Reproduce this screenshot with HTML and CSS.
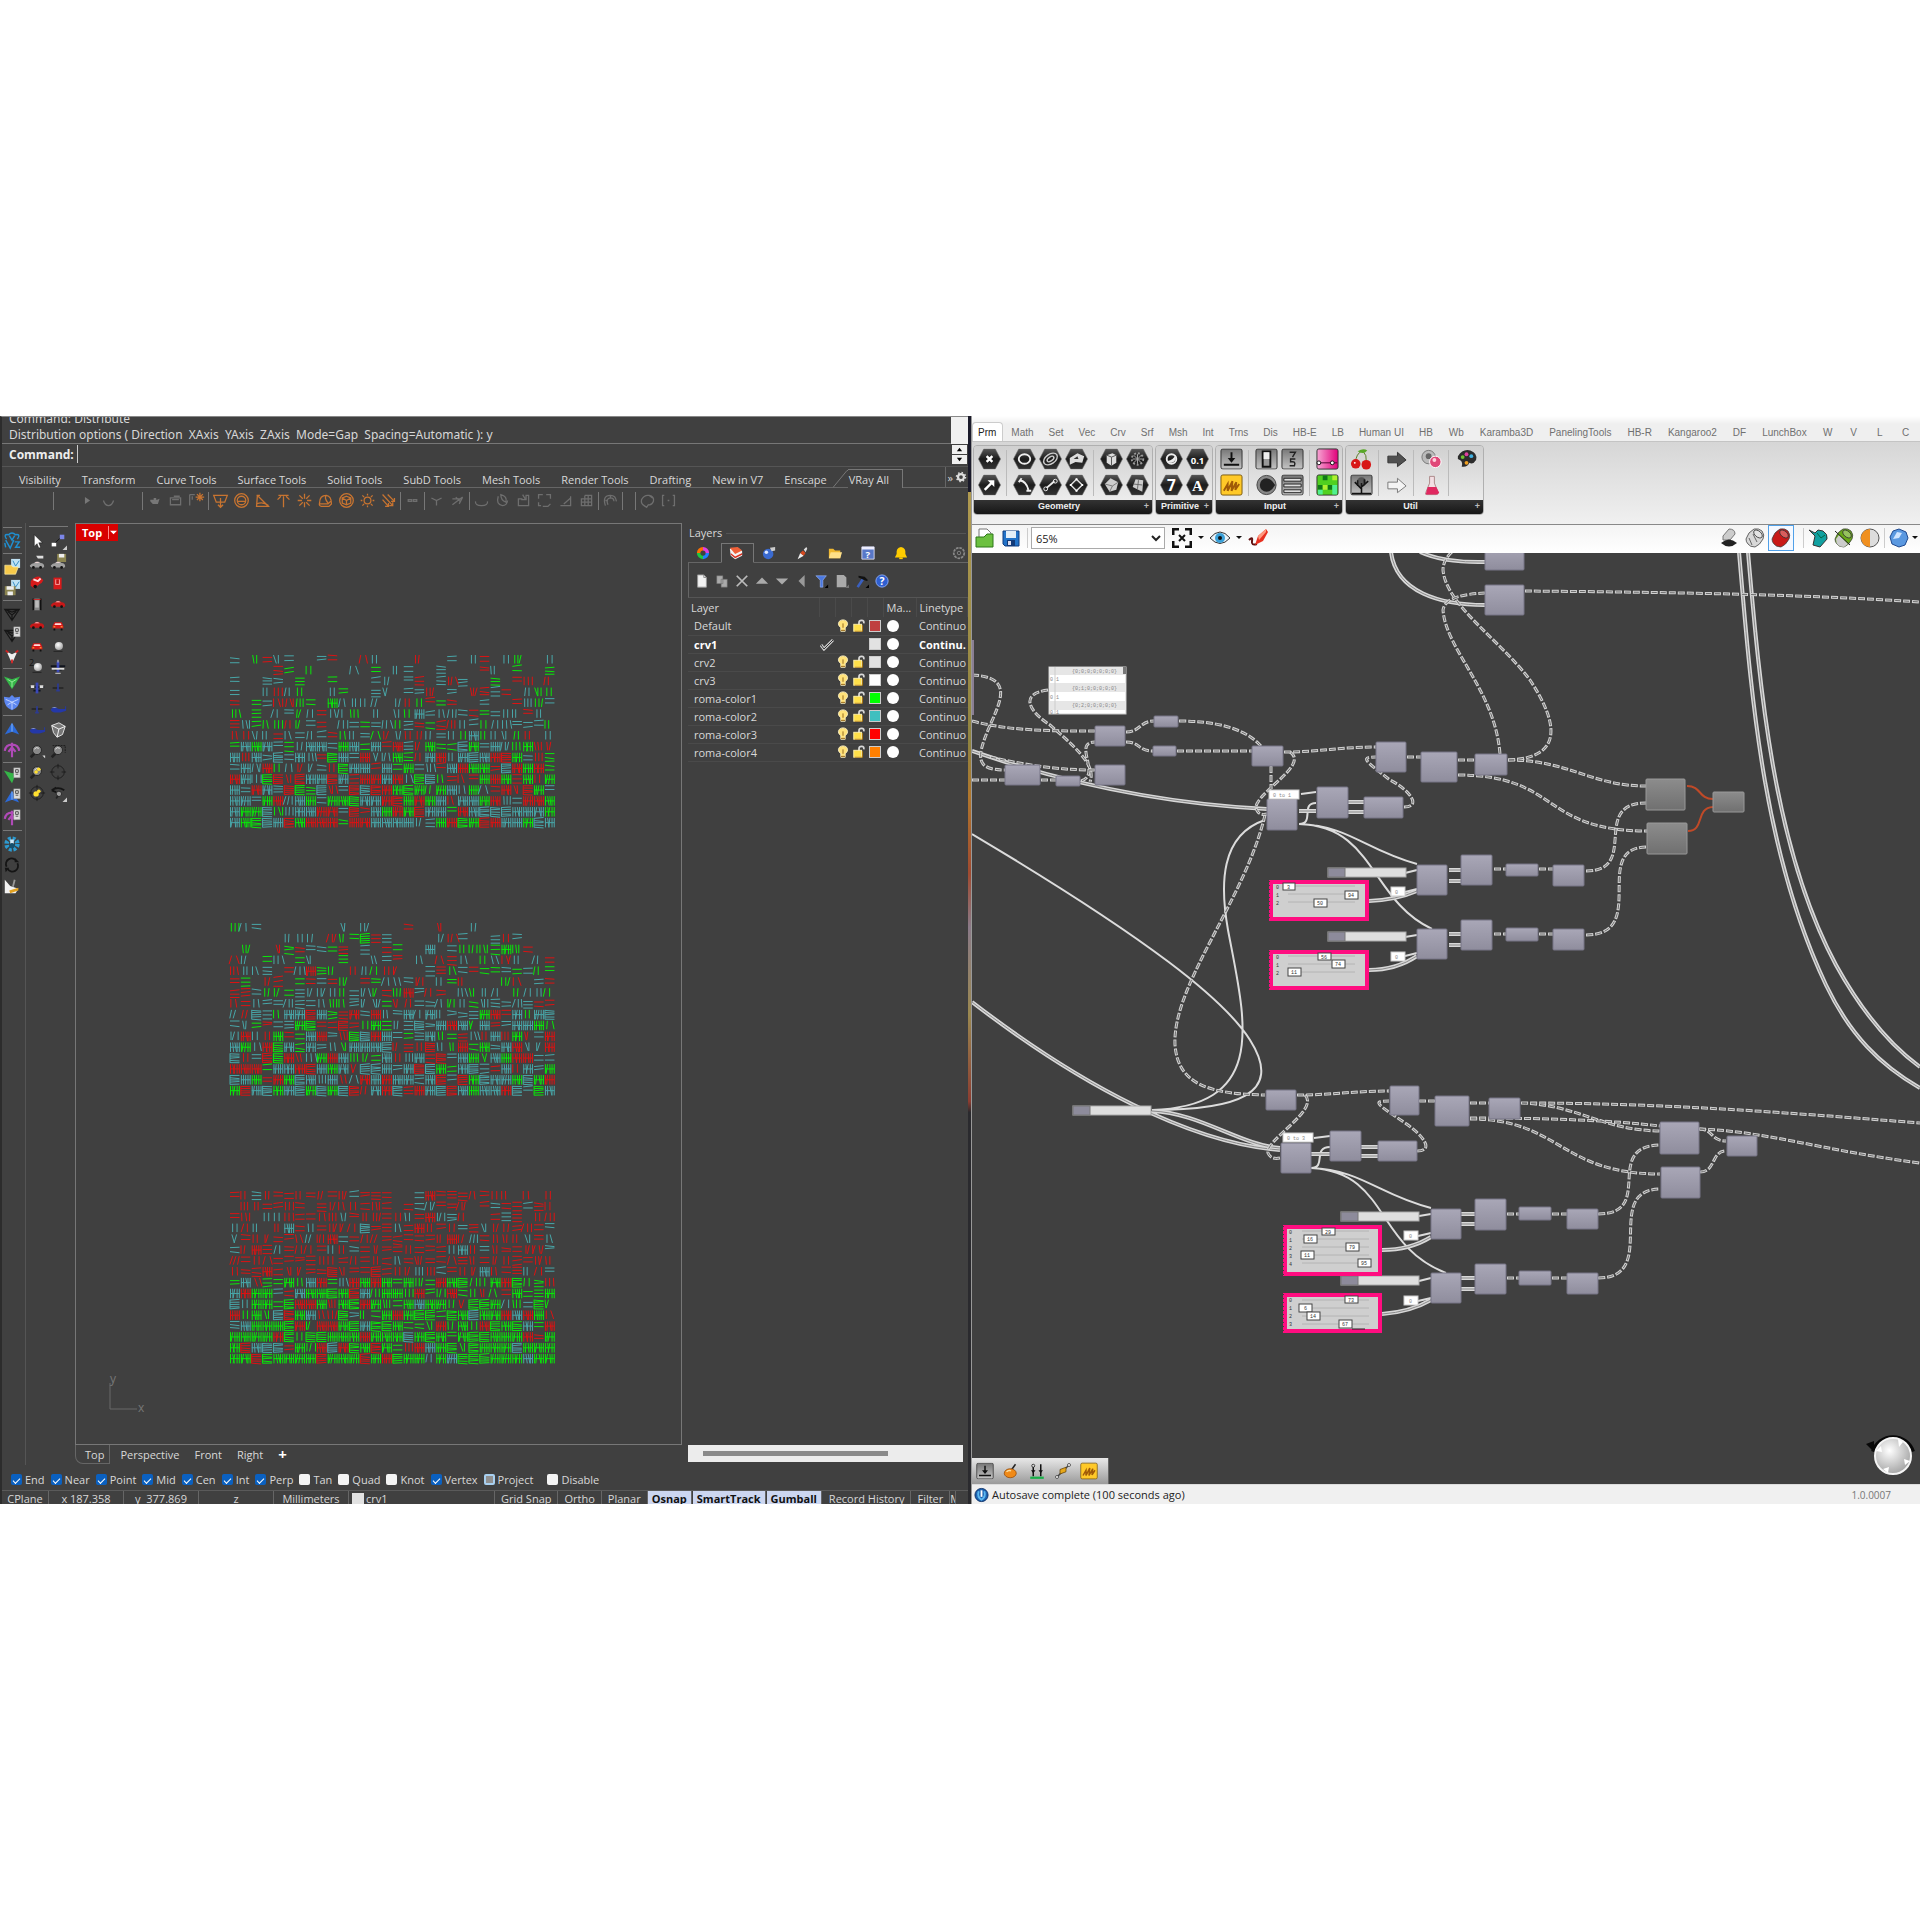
FILE: index.html
```
<!DOCTYPE html>
<html lang="en">

<head>
    <meta charset="UTF-8">
    <meta name="viewport" content="width=device-width, initial-scale=1.0">
    <title>Modeler and Node Canvas</title>
    <link rel="stylesheet" href="styles.css">
</head>

<body>
    <!-- Shared icons -->
    <svg class="sprite" aria-hidden="true">
        <defs>
            <linearGradient id="gNode" x1="0" y1="0" x2="0" y2="1"><stop offset="0" stop-color="#a9a7b7"/><stop offset="1" stop-color="#8f8d9d"/></linearGradient>
            <linearGradient id="gGrey" x1="0" y1="0" x2="0" y2="1"><stop offset="0" stop-color="#8c8c8c"/><stop offset="1" stop-color="#707070"/></linearGradient>
            <linearGradient id="gHex" x1="0" y1="0" x2="0" y2="1"><stop offset="0" stop-color="#555"/><stop offset=".5" stop-color="#1c1c1c"/><stop offset="1" stop-color="#333"/></linearGradient>
            <linearGradient id="gTile" x1="0" y1="0" x2="0" y2="1"><stop offset="0" stop-color="#777"/><stop offset="1" stop-color="#c4c4c4"/></linearGradient>
            <linearGradient id="gPink" x1="0" y1="0" x2="1" y2="0"><stop offset="0" stop-color="#f7a6d4"/><stop offset="1" stop-color="#e0007a"/></linearGradient>
            <radialGradient id="gBall" cx=".4" cy=".35" r=".7"><stop offset="0" stop-color="#fff"/><stop offset="1" stop-color="#a0a0a0"/></radialGradient>
            <symbol id="hex" viewBox="0 0 24 22"><path d="M6 .5h12L23.500 11 18 21.500H6L.5 11z" fill="url(#gHex)" stroke="#666" stroke-width=".6"/></symbol>
            <symbol id="tile" viewBox="0 0 24 22"><rect x="1" y=".5" width="22" height="21" rx="2" fill="url(#gTile)" stroke="#333"/></symbol>
            <symbol id="bulb" viewBox="0 0 14 16"><path d="M4.500 10C-.5 6 2 1 7 1s7.500 5 2.500 9v4h-5z" fill="#ffe27a" stroke="#fff4c8"/><path d="M7 5v5M4.500 13h5" stroke="#8a5a10" fill="none"/></symbol>
            <symbol id="lock" viewBox="0 0 14 16"><path d="M7 7V4q0-2.500 3-2.500T12.500 5" fill="none" stroke="#d8d8d8" stroke-width="2"/><rect x="1" y="6" width="9" height="8" fill="#ffe04a" stroke="#fff2b0"/><path d="M2 14h9V7" fill="none" stroke="#b07a10"/></symbol>
            <symbol id="page" viewBox="0 0 16 16"><path d="M3 1h7l3 3v11H3z" fill="#f2f2f2" stroke="#999"/><path d="M10 1v3h3" fill="none" stroke="#888"/></symbol>
            <symbol id="sheet" viewBox="0 0 20 20"><rect x="12" y="1" width="7" height="11" fill="#ddd" stroke="#888" stroke-width=".6"/><path d="M14 3h3v3h-3zM14 8h3" fill="none" stroke="#444"/></symbol>
            <symbol id="drop" viewBox="0 0 20 20"><path d="M20 15v5h-5z" fill="#ccc"/></symbol>
            <symbol id="carSide" viewBox="0 0 20 20"><path d="M2 11q2-3 5-3 3-3 7 0 4 0 4 4-1 2-3 1H4q-2 0-2-2z" fill="currentColor"/><path d="M7 8q3-2 6 0z" fill="#f4dada"/><circle cx="6" cy="13" r="1.500" fill="#111"/><circle cx="14" cy="13" r="1.500" fill="#111"/></symbol>
            <symbol id="carFront" viewBox="0 0 20 20"><path d="M6 7h8l2 4v3H4v-3z" fill="#d81a1a"/><path d="M7 8h6l1 2H6z" fill="#ffdede"/><path d="M5 14h2v2H5zM13 14h2v2h-2z" fill="#111"/><path d="M5 12h2M13 12h2" stroke="#ffd040"/></symbol>
            <symbol id="ball" viewBox="0 0 20 20"><circle cx="11" cy="10" r="4.500" fill="url(#gBall)"/><path d="M5 16h10" stroke="#222"/></symbol>
            <symbol id="heli" viewBox="0 0 20 20"><path d="M2 10q4-3 9 0h7v-3l1 0v5l-6 2H6q-4-1-4-4z" fill="#2438a8"/><path d="M3 9q3-2 6 0z" fill="#9ab0ff"/></symbol>
            <symbol id="plane" viewBox="0 0 20 20"><path d="M2 9h16M6 13h8" stroke="#10141e" stroke-width="2"/><path d="M10 4v12" stroke="#3a48b8" stroke-width="3"/></symbol>
            <symbol id="lens" viewBox="0 0 20 20"><path d="M3 17l5-5" stroke="#222" stroke-width="3"/><circle cx="10" cy="9" r="5" fill="#888" stroke="#222"/><path d="M7 8q2-3 5-1" stroke="#eee" fill="none"/></symbol>
            <symbol id="cross" viewBox="0 0 20 20"><circle cx="10" cy="10" r="7" fill="none" stroke="#1c1c1c"/><path d="M10 1v5M10 14v5M1 10h5M14 10h5" stroke="#1c1c1c"/></symbol>
            <symbol id="tri" viewBox="0 0 20 20"><path d="M2 5h16l-8 12zM5 7l5 4 5-4M10 11v5M2 5l8 3 8-3" fill="none" stroke="currentColor" stroke-width="1.400"/></symbol>
            <symbol id="peak" viewBox="0 0 20 20"><path d="M10 3l8 13-8-3-8 3z" fill="currentColor"/><path d="M10 4v9" stroke="#8ac0ff"/></symbol>
            <symbol id="anchor" viewBox="0 0 20 20"><path d="M10 2v16M2 11q1-7 8-7t8 7M6 12l4-5 4 5" fill="none" stroke="#b04ab8" stroke-width="2.400"/></symbol>
            <symbol id="save" viewBox="0 0 20 20"><path d="M2 3h16v15H4l-2-2z" fill="#2272c8" stroke="#103c80"/><path d="M5 3h10v7H5z" fill="#e4eef8"/><path d="M6 12h8v6H6z" fill="#123a78"/><path d="M7 13h3v4H7z" fill="#dde"/></symbol>
            <symbol id="drum" viewBox="0 0 20 20"><path d="M1 11Q3 4 9 1q5-1 8 2 3 4 1 8-3 6-8 8-5 0-7-3-2-2-2-5z" fill="currentColor" stroke="#444" stroke-width=".8"/><ellipse cx="13" cy="6" rx="5" ry="3" transform="rotate(40 13 6)" fill="#fff" fill-opacity=".3" stroke="#333" stroke-width=".8"/></symbol>
            <symbol id="carat" viewBox="0 0 6 6"><path d="M0 1h6L3 4z" fill="#111"/></symbol>
        </defs>
    </svg>

    <main class="desktop">
        <section class="modeler" aria-label="Modeler">
            <div class="history">
                <p>Command: Distribute</p>
                <p>Distribution options ( Direction&nbsp; XAxis&nbsp; YAxis&nbsp; ZAxis&nbsp; Mode=Gap&nbsp; Spacing=Automatic ): y</p>
            </div>
            <div class="command">
                <label for="cmd">Command:</label>
                <input id="cmd" type="text">
                <div class="spinner"><button aria-label="Up"><svg viewBox="0 0 8 8"><path d="M1 6l3-4 3 4z"/></svg></button><button aria-label="Down"><svg viewBox="0 0 8 8"><path d="M1 2l3 4 3-4z"/></svg></button></div>
            </div>
            <nav class="tool-tabs">
                <button>Visibility</button><button>Transform</button><button>Curve Tools</button><button>Surface Tools</button><button>Solid Tools</button><button>SubD Tools</button><button>Mesh Tools</button><button>Render Tools</button><button>Drafting</button><button>New in V7</button><button>Enscape</button><button class="current"><svg class="slant" viewBox="0 0 15 20"><path d="M0 19.500L14 2.500H15" /></svg>VRay All</button>
                <button class="tab-menu" aria-label="Tab options">»<svg viewBox="0 0 16 16"><circle cx="8" cy="8" r="4" fill="none" stroke="#ddd" stroke-width="3"/><circle cx="8" cy="8" r="6" fill="none" stroke="#ddd" stroke-width="2" stroke-dasharray="2 2.700"/></svg></button>
            </nav>
            <div class="vray-bar">
                <i></i>
                <span class="space"></span>
                <button><svg viewBox="0 0 20 20"><path d="M7 6l6 4-6 4z" fill="#777"/></svg></button>
                <button><svg viewBox="0 0 20 20"><path d="M4 10q2 6 6 6t6-6" class="dim"/></svg></button>
                <span class="space"></span>
                <i></i>
                <button><svg viewBox="0 0 20 20"><path d="M5 9h8l3-1-2 6H8L5 11zM9 7h3v2H9z" fill="#777"/></svg></button>
                <button><svg viewBox="0 0 20 20"><path d="M4 7h12v8H4zM6 9h8M8 5h7" class="dim"/></svg></button>
                <button><svg viewBox="0 0 20 20"><path d="M2 3h6M2 3v13M5 5v4" class="dim"/><path d="M14 1v10M9 6h10M10.500 2.500l7 7M17.500 2.500l-7 7" class="lit"/></svg></button>
                <i></i>
                <button><svg viewBox="0 0 20 20"><path d="M2 4h16l-3 8H5zM10 7v10M7 15l3 3 3-3" class="lit"/></svg></button>
                <button><svg viewBox="0 0 20 20"><circle cx="10" cy="10" r="8" class="lit"/><circle cx="10" cy="10" r="5" class="lit"/><path d="M5 11h10" class="lit"/></svg></button>
                <button><svg viewBox="0 0 20 20"><path d="M4 4L3 17h14L5 5M3 14q8-3 14 2M3 4h4" class="lit"/></svg></button>
                <button><svg viewBox="0 0 20 20"><path d="M10 5v13M4 4h12M3 9l4-4M17 9l-4-4" class="lit"/></svg></button>
                <button><svg viewBox="0 0 20 20"><path d="M10 2v6M10 12v6M2 10h5M13 10h5M4 4l4 4M16 4l-4 4M4 16l4-4M16 16l-4-4" class="lit"/></svg></button>
                <button><svg viewBox="0 0 20 20"><path d="M3 13q0-9 8-9 6 1 6 10l-3 3H5q-3-1-2-4zM3 14h10l4-4M11 4q-3 3 2 9" class="lit"/></svg></button>
                <button><svg viewBox="0 0 20 20"><circle cx="10" cy="10" r="8" class="lit"/><path d="M10 5l5 2v6l-5 2-5-2V7zM5 7l5 3 5-3M10 10v5" class="lit"/></svg></button>
                <button><svg viewBox="0 0 20 20"><circle cx="10" cy="10" r="4" class="lit"/><path d="M10 2v2M10 16v2M2 10h2M16 10h2M4 4l2 2M16 4l-2 2M4 16l2-2M16 16l-2-2" class="lit"/></svg></button>
                <button><svg viewBox="0 0 20 20"><path d="M3 3l12 13M9 3l8 8M3 9l7 8M15 12v4h-4M17 7v4h-4M10 13v4H6" class="lit"/></svg></button>
                <i></i>
                <button><svg viewBox="0 0 20 20"><path d="M5 9h4v2H5zM11 9h4v2h-4z" class="dim"/></svg></button>
                <i></i>
                <button><svg viewBox="0 0 20 20"><path d="M4 7l6 3 6-3M10 10v6" class="dim"/></svg></button>
                <button><svg viewBox="0 0 20 20"><path d="M4 8h10M4 15l12-9M8 6l5 5M12 14l4-8" class="dim"/></svg></button>
                <i></i>
                <button><svg viewBox="0 0 20 20"><path d="M3 11q-1 5 7 5t7-5" class="dim"/></svg></button>
                <button><svg viewBox="0 0 20 20"><path d="M5 5q-3 10 5 11 5 0 6-6M8 3q8 2 6 9-6-2-6-9z" class="dim"/></svg></button>
                <button><svg viewBox="0 0 20 20"><path d="M4 8v8h12V4h-3v5H8V8zM9 3l3 5" class="dim"/></svg></button>
                <button><svg viewBox="0 0 20 20"><path d="M3 8V3h5M12 3h5v5M3 12v4h3M8 17h6l3-3" class="dim"/></svg></button>
                <button><svg viewBox="0 0 20 20"><path d="M4 16h12V5M8 14l8-7" class="dim"/></svg></button>
                <button><svg viewBox="0 0 20 20"><path d="M4 8h12v8H4zM8 4v12M12 4v12M4 12h12M8 4h8v4" class="dim"/></svg></button>
                <i></i>
                <button><svg viewBox="0 0 20 20"><path d="M4 16q-4-12 6-12 6 0 7 7M7 15q-3-7 3-8 4 0 4 4M4 10h3M10 4v3" class="dim"/></svg></button>
                <i></i>
                <span class="space short"></span>
                <i></i>
                <button><svg viewBox="0 0 20 20"><path d="M6 16q-4-2-3-7 3-6 9-5 6 1 5 7-2 5-6 4l-2 3zM12 4l4 3" class="dim"/></svg></button>
                <button><svg viewBox="0 0 20 20"><path d="M5 4H3v12h2M15 4h2v12h-2M9 10h2" class="dim"/></svg></button>
            </div>

            <div class="workspace">
                <aside class="side side-one">
                    <hr>
                    <button><svg viewBox="0 0 20 20"><path d="M4 8Q0 2 6 3q4-4 8 0 6-1 2 5M3 9l5 9 4-9M7 4l3 5 3-5M13 11h5l-4 6h5M2 12l1 5" fill="none" stroke="#1f8fd0" stroke-width="1.600"/></svg></button>
                    <hr>
                    <button><svg viewBox="0 0 20 20"><path d="M9 1h10v10H9z" fill="#bfe2f4"/><path d="M11 3l3 6 4-6" fill="none" stroke="#2b87c0"/><path d="M2 8h7l2 2h6l-3 8H2z" fill="#f6c94a" stroke="#fff0b0" stroke-width=".7"/></svg></button>
                    <button><svg viewBox="0 0 20 20"><path d="M9 1h10v10H9z" fill="#bfe2f4"/><path d="M11 3l3 6 4-6" fill="none" stroke="#2b87c0"/><path d="M2 8h12v10H2z" fill="#8b8450"/><path d="M4 8h8v4H4zM5 14h6v4H5z" fill="#eee"/></svg></button>
                    <hr>
                    <button class="ink"><svg viewBox="0 0 20 20"><use href="#tri"/></svg></button>
                    <button class="ink"><svg viewBox="0 0 20 20"><use href="#tri"/><use href="#sheet"/></svg></button>
                    <button><svg viewBox="0 0 20 20"><path d="M4 5l6 3 6-3-4 9-2 4-2-4z" fill="#eee"/><path d="M3 4l3 2M17 4l-3 2M10 14v4" stroke="#d02020" stroke-width="2"/></svg></button>
                    <hr>
                    <button><svg viewBox="0 0 20 20"><path d="M1 4l9 3 9-3-9 14z" fill="#35b548"/><path d="M5 7l5 3 5-3M10 10v6" stroke="#9df0a0" fill="none"/></svg></button>
                    <button><svg viewBox="0 0 20 20"><path d="M10 1l3 3 6-1q0 12-9 15Q1 15 1 3l6 1z" fill="#5c86f0"/><path d="M3 6l7 3 7-3M10 9v8M5 12l5-3 5 3" stroke="#c8d8ff" fill="none"/></svg></button>
                    <hr>
                    <button class="blue"><svg viewBox="0 0 20 20"><use href="#peak"/></svg></button>
                    <button><svg viewBox="0 0 20 20"><use href="#anchor"/></svg></button>
                    <hr>
                    <button><svg viewBox="0 0 20 20"><path d="M1 4l9 3 5-1-5 12z" fill="#35b548"/><use href="#sheet"/></svg></button>
                    <button class="blue"><svg viewBox="0 0 20 20"><use href="#peak"/><use href="#sheet"/></svg></button>
                    <button><svg viewBox="0 0 20 20"><use href="#anchor"/><use href="#sheet"/></svg></button>
                    <hr>
                    <button><svg viewBox="0 0 20 20"><circle cx="10" cy="10" r="6" fill="none" stroke="#2c9ad0" stroke-width="5" stroke-dasharray="3 1.700"/><path d="M8 5h4v7H8z" fill="#cfe8f6"/><circle cx="10" cy="12" r="3" fill="#14506e"/></svg></button>
                    <button><svg viewBox="0 0 20 20"><path d="M4 12A6 6 0 0 1 15 6M16 8a6 6 0 0 1-11 6" fill="none" stroke="#151515" stroke-width="2"/><path d="M13 2l5 5h-5zM2 13h5l-4 5z" fill="#151515"/></svg></button>
                    <button><svg viewBox="0 0 20 20"><path d="M2 3l6 7 9 3-3 5H2z" fill="#f2f2f2"/><path d="M13 3l-2 8" stroke="#999" stroke-width="2"/><path d="M7 15l10-3v3l-9 3z" fill="#e0a020"/></svg></button>
                </aside>
                <aside class="side side-two">
                    <hr>
                    <button><svg viewBox="0 0 20 20"><path d="M7 3v13l3-3 2 5 2-1-2-5h4z" fill="#fff" stroke="#000" stroke-width=".5"/></svg></button>
                    <button><svg viewBox="0 0 20 20"><path d="M5 14l9-9" stroke="#111"/><path d="M3 12h5v4H3z" fill="#fff"/><path d="M12 3h5v5h-5z" fill="#7c86e8"/><use href="#drop"/></svg></button>
                    <button class="silver"><svg viewBox="0 0 20 20"><path d="M9 3h8v3h-6z" fill="#ddd"/><use href="#carSide" y="3"/></svg></button>
                    <button class="silver"><svg viewBox="0 0 20 20"><path d="M9 1h10v9H9z" fill="#8b8450"/><path d="M11 1h6v4h-6z" fill="#eee"/><use href="#carSide" y="3"/></svg></button>
                    <button><svg viewBox="0 0 20 20"><path d="M3 8q5-6 10-5l4 4q-1 3-4 4l-6 5-4-3z" fill="#d81a1a"/><path d="M6 6l5 2 3-3" stroke="#ffdede" stroke-width="2" fill="none"/><circle cx="8" cy="14" r="2" fill="#111"/></svg></button>
                    <button><svg viewBox="0 0 20 20"><path d="M5 4h9v13H5z" fill="#d81a1a"/><path d="M7 6h5v6H7z" fill="#ffb0b0"/><path d="M8 6h3v5H8z" fill="#c01010"/></svg></button>
                    <button><svg viewBox="0 0 20 20"><path d="M6 4h8v13H6z" fill="#888"/><path d="M6 4v13M14 4v13" stroke="#111" stroke-width="2"/><path d="M8 6h4v8H8z" fill="#bbb"/><path d="M6 5h8" stroke="#c22"/></svg></button>
                    <button class="red"><svg viewBox="0 0 20 20"><use href="#carSide"/></svg></button>
                    <button class="red"><svg viewBox="0 0 20 20"><use href="#carSide"/></svg></button>
                    <button><svg viewBox="0 0 20 20"><use href="#carFront"/></svg></button>
                    <button><svg viewBox="0 0 20 20"><use href="#carFront"/></svg></button>
                    <button><svg viewBox="0 0 20 20"><use href="#ball"/></svg></button>
                    <button><svg viewBox="0 0 20 20"><use href="#ball"/><text x="1" y="9" font-size="10" fill="#151515">2</text></svg></button>
                    <button><svg viewBox="0 0 20 20"><use href="#plane"/><path d="M3 12h14" stroke="#ddd" stroke-width="2"/><path d="M7 17h6M10 2v3" stroke="#ddd"/></svg></button>
                    <button><svg viewBox="0 0 20 20"><use href="#plane"/><path d="M3 7h4v3H3zM13 7h4v3h-4z" fill="#ddd"/></svg></button>
                    <button><svg viewBox="0 0 20 20"><path d="M4 10h12" stroke="#111"/><path d="M10 5v9M8 13h4" stroke="#2c3a90" stroke-width="2"/></svg></button>
                    <button><svg viewBox="0 0 20 20"><path d="M4 10h12" stroke="#111"/><path d="M10 7v7M8 14h4" stroke="#2c3a90" stroke-width="2"/></svg></button>
                    <button><svg viewBox="0 0 20 20"><use href="#heli"/></svg></button>
                    <button><svg viewBox="0 0 20 20"><use href="#heli"/></svg></button>
                    <button><svg viewBox="0 0 20 20"><path d="M3 5l8-3 7 4-3 9-6 3-4-5z" fill="#777" stroke="#eee"/><path d="M3 5l8 4 7-3M11 9l-2 9" stroke="#fff" fill="none"/></svg></button>
                    <button><svg viewBox="0 0 20 20"><use href="#lens"/><path d="M16 15l3 3v-3z" fill="#ddd"/></svg></button>
                    <button><svg viewBox="0 0 20 20"><use href="#lens"/><path d="M4 4h14v8" fill="none" stroke="#1a1a1a" stroke-dasharray="2 1"/></svg></button>
                    <button><svg viewBox="0 0 20 20"><use href="#lens"/><circle cx="9" cy="10" r="2" fill="#ffe030"/><circle cx="12" cy="7" r="2" fill="#ffe030"/></svg></button>
                    <button><svg viewBox="0 0 20 20"><use href="#cross"/></svg></button>
                    <button><svg viewBox="0 0 20 20"><use href="#cross"/><circle cx="9" cy="11" r="3" fill="#ffe030"/><circle cx="12" cy="8" r="2" fill="#ffe030"/></svg></button>
                    <button><svg viewBox="0 0 20 20"><path d="M3 7q7-5 14 0M3 7l5-3M3 7l5 2" fill="none" stroke="#151515" stroke-width="2"/><circle cx="11" cy="11" r="3" fill="#999" stroke="#222"/><path d="M8 16l2-3" stroke="#222" stroke-width="2"/><use href="#drop"/></svg></button>
                </aside>

                <div class="view">
                    <div class="viewport">
                        <button class="view-name">Top<svg viewBox="0 0 8 8"><path d="M0 2h8L4 6z"/></svg></button>
                        <svg class="drawing" viewBox="76 525 606 920" preserveAspectRatio="xMinYMin slice">
                            <g id="cells"></g>
                            <path d="M110 1384v26h27" fill="none" stroke="#686868"/>
                            <text x="110" y="1384" class="axis">y</text>
                            <text x="138" y="1413" class="axis">x</text>
                        </svg>
                    </div>
                    <nav class="view-tabs"><button class="current">Top</button><button>Perspective</button><button>Front</button><button>Right</button><button class="plus" aria-label="Add view">+</button></nav>
                </div>

                <section class="layers">
                    <h2>Layers</h2>
                    <div class="panel-tabs">
                        <button><svg viewBox="0 0 16 16"><g fill="none" stroke-width="4"><path d="M8 3a5 5 0 0 1 5 5" stroke="#e040e0"/><path d="M13 8a5 5 0 0 1-5 5" stroke="#2080ff"/><path d="M8 13a5 5 0 0 1-5-5" stroke="#20c840"/><path d="M3 8a5 5 0 0 1 5-5" stroke="#ff7000"/></g></svg></button>
                        <button class="current"><svg viewBox="0 0 16 16"><path d="M1 3l9-1 5 4v5l-8 4-5-4z" fill="#f4f4f4"/><path d="M1 2l9-1 5 4-8 4z" fill="#f06038"/><path d="M2 8l5 4 8-4v2l-8 4-5-4z" fill="#d83020"/></svg></button>
                        <button><svg viewBox="0 0 16 16"><circle cx="7" cy="9" r="6" fill="#3a6ad0"/><circle cx="5" cy="7" r="2" fill="#dde8ff"/><path d="M9 2l6-1v4l-4 1z" fill="#ccc"/></svg></button>
                        <button><svg viewBox="0 0 16 16"><path d="M3 15l3-7 4 3z" fill="#eee"/><path d="M6 8l3-3 3 3-2 3z" fill="#d84a20"/><path d="M10 4l3-3 1 2-2 4z" fill="#ddd"/></svg></button>
                        <button><svg viewBox="0 0 16 16"><path d="M1 3h5l2 2h6v9H1z" fill="#f0b830"/><path d="M3 7h13l-2 7H1z" fill="#ffe088"/></svg></button>
                        <button><svg viewBox="0 0 16 16"><path d="M1 1h14v14H1z" fill="#5878c8" stroke="#dde"/><path d="M1 1h14v3H1z" fill="#eef"/><text x="5" y="14" font-size="11" font-weight="bold" fill="#fff">?</text></svg></button>
                        <button><svg viewBox="0 0 16 16"><path d="M8 1q6 1 5 8l2 4H1l2-4q-1-7 5-8z" fill="#ffcc00"/><path d="M6 13h4v2H6z" fill="#ffcc00"/></svg></button>
                        <button class="gear"><svg viewBox="0 0 16 16"><circle cx="8" cy="8" r="6" fill="none" stroke="#888" stroke-width="2" stroke-dasharray="3 1"/><circle cx="8" cy="8" r="2" fill="none" stroke="#888"/></svg></button>
                    </div>
                    <div class="layer-tools">
                        <button><svg viewBox="0 0 16 16"><use href="#page"/></svg></button>
                        <button><svg viewBox="0 0 16 16"><path d="M2 2h7v9H2zM7 6h7v9H7z" fill="#aaa" stroke="#666" stroke-width=".6"/></svg></button>
                        <button><svg viewBox="0 0 16 16"><path d="M2 2l12 12M14 2L2 14" stroke="#bbb" stroke-width="2"/></svg></button>
                        <button><svg viewBox="0 0 16 16"><path d="M1 11h14L8 4z" fill="#aaa"/></svg></button>
                        <button><svg viewBox="0 0 16 16"><path d="M1 5h14l-7 7z" fill="#aaa"/></svg></button>
                        <button><svg viewBox="0 0 16 16"><path d="M11 1v14L4 8z" fill="#999"/></svg></button>
                        <button><svg viewBox="0 0 16 16"><path d="M1 2h12L9 7v8H6V7z" fill="#4a78e0" stroke="#aac4ff" stroke-width=".6"/><path d="M15 12v4h-4z"/></svg></button>
                        <button><svg viewBox="0 0 16 16"><path d="M2 1h8l3 3v11H2z" fill="#aaa"/><path d="M16 12v4h-4z" fill="#777"/></svg></button>
                        <button><svg viewBox="0 0 16 16"><path d="M3 15l6-9" stroke="#3a60c0" stroke-width="3"/><path d="M4 2l7 1 4 4-2 1-9-4z" fill="#111"/><path d="M16 12v4h-4z"/></svg></button>
                        <button><svg viewBox="0 0 16 16"><circle cx="8" cy="8" r="7" fill="#2f5fd0" stroke="#8fb0ff"/><text x="5" y="13" font-size="12" font-weight="bold" fill="#fff">?</text></svg></button>
                    </div>
                    <table>
                        <thead><tr><th class="c-name">Layer</th><th class="c-icon"></th><th class="c-icon"></th><th class="c-icon"></th><th class="c-icon"></th><th class="c-mat">Ma...</th><th>Linetype</th></tr></thead>
                        <tbody>
                            <tr><td>Default</td><td></td><td><svg class="ico"><use href="#bulb"/></svg></td><td><svg class="ico"><use href="#lock"/></svg></td><td><b class="swatch brick"></b></td><td><b class="dot"></b></td><td>Continuo</td></tr>
                            <tr class="active"><td>crv1</td><td><svg class="ico" viewBox="0 0 14 14"><path d="M1 8l3 4 9-9" fill="none" stroke="#ccc" stroke-width="3"/><path d="M1 8l3 4 9-9" fill="none" stroke="#333"/></svg></td><td></td><td></td><td><b class="swatch pale"></b></td><td><b class="dot"></b></td><td>Continu.</td></tr>
                            <tr><td>crv2</td><td></td><td><svg class="ico"><use href="#bulb"/></svg></td><td><svg class="ico"><use href="#lock"/></svg></td><td><b class="swatch pale"></b></td><td><b class="dot"></b></td><td>Continuo</td></tr>
                            <tr><td>crv3</td><td></td><td><svg class="ico"><use href="#bulb"/></svg></td><td><svg class="ico"><use href="#lock"/></svg></td><td><b class="swatch white"></b></td><td><b class="dot"></b></td><td>Continuo</td></tr>
                            <tr><td>roma-color1</td><td></td><td><svg class="ico"><use href="#bulb"/></svg></td><td><svg class="ico"><use href="#lock"/></svg></td><td><b class="swatch green"></b></td><td><b class="dot"></b></td><td>Continuo</td></tr>
                            <tr><td>roma-color2</td><td></td><td><svg class="ico"><use href="#bulb"/></svg></td><td><svg class="ico"><use href="#lock"/></svg></td><td><b class="swatch teal"></b></td><td><b class="dot"></b></td><td>Continuo</td></tr>
                            <tr><td>roma-color3</td><td></td><td><svg class="ico"><use href="#bulb"/></svg></td><td><svg class="ico"><use href="#lock"/></svg></td><td><b class="swatch scarlet"></b></td><td><b class="dot"></b></td><td>Continuo</td></tr>
                            <tr><td>roma-color4</td><td></td><td><svg class="ico"><use href="#bulb"/></svg></td><td><svg class="ico"><use href="#lock"/></svg></td><td><b class="swatch orange"></b></td><td><b class="dot"></b></td><td>Continuo</td></tr>
                        </tbody>
                    </table>
                    <div class="hscroll"><span></span></div>
                </section>
            </div>

            <form class="osnap">
                <label><input type="checkbox" checked>End</label>
                <label><input type="checkbox" checked>Near</label>
                <label><input type="checkbox" checked>Point</label>
                <label><input type="checkbox" checked>Mid</label>
                <label><input type="checkbox" checked>Cen</label>
                <label><input type="checkbox" checked>Int</label>
                <label><input type="checkbox" checked>Perp</label>
                <label><input type="checkbox">Tan</label>
                <label><input type="checkbox">Quad</label>
                <label><input type="checkbox">Knot</label>
                <label><input type="checkbox" checked>Vertex</label>
                <label><input type="checkbox" class="partial">Project</label>
                <label class="disable"><input type="checkbox">Disable</label>
            </form>
            <footer class="status">
                <span>CPlane</span><span>x 187.358</span><span>y&nbsp; 377.869</span><span>z</span><span>Millimeters</span><span class="layer-cell"><b></b>crv1</span>
                <button>Grid Snap</button><button>Ortho</button><button>Planar</button><button class="on">Osnap</button><button class="on">SmartTrack</button><button class="on">Gumball</button><button>Record History</button><button>Filter</button><span class="cut">M</span>
            </footer>
        </section>

        <div class="wallpaper"></div>

        <section class="nodes" aria-label="Node editor">
            <nav class="ribbon-tabs">
                <button class="current">Prm</button><button>Math</button><button>Set</button><button>Vec</button><button>Crv</button><button>Srf</button><button>Msh</button><button>Int</button><button>Trns</button><button>Dis</button><button>HB-E</button><button>LB</button><button>Human UI</button><button>HB</button><button>Wb</button><button>Karamba3D</button><button>PanelingTools</button><button>HB-R</button><button>Kangaroo2</button><button>DF</button><button>LunchBox</button><button>W</button><button>V</button><button>L</button><button>C</button>
            </nav>
            <div class="ribbon">
                <div class="group">
                    <div class="icons">
                        <div class="cluster">
                            <button><svg viewBox="0 0 24 22"><use href="#hex"/><path d="M9 8l6 6M15 8l-6 6" stroke="#fff" stroke-width="2.500"/></svg></button>
                            <button><svg viewBox="0 0 24 22"><use href="#hex"/><path d="M7 16l7-7" stroke="#fff" stroke-width="2.500"/><path d="M17 6v7l-7-7z" fill="#fff"/></svg></button>
                        </div><i></i>
                        <div class="cluster">
                            <button><svg viewBox="0 0 24 22"><use href="#hex"/><ellipse cx="12" cy="11" rx="6" ry="5" fill="none" stroke="#eee" stroke-width="2"/></svg></button>
                            <button><svg viewBox="0 0 24 22"><use href="#hex"/><path d="M7 6q7 1 9 10M6 8l3-4M14 17h5" fill="none" stroke="#eee" stroke-width="2"/></svg></button>
                            <button><svg viewBox="0 0 24 22"><use href="#hex"/><g fill="none" stroke="#ccc" stroke-width="1.500" transform="rotate(-35 12 11)"><ellipse cx="12" cy="11" rx="8" ry="5"/><ellipse cx="12" cy="11" rx="4" ry="2"/></g></svg></button>
                            <button><svg viewBox="0 0 24 22"><use href="#hex"/><path d="M8 14l8-7" stroke="#eee" stroke-width="2"/><circle cx="7" cy="15" r="2" fill="none" stroke="#eee"/><circle cx="17" cy="7" r="2" fill="none" stroke="#eee"/></svg></button>
                            <button><svg viewBox="0 0 24 22"><use href="#hex"/><path d="M5 10l8-5 7 3-2 7-7-1-6 3z" fill="#ddd"/><path d="M9 11l4-3 1 3z" fill="#333"/></svg></button>
                            <button><svg viewBox="0 0 24 22"><use href="#hex"/><path d="M12 5l6 6-6 6-6-6z" fill="none" stroke="#ddd" stroke-width="1.500"/><path d="M11 4h2v2h-2zM17 10h2v2h-2zM11 16h2v2h-2zM5 10h2v2H5z" fill="#fff"/></svg></button>
                        </div><i></i>
                        <div class="cluster">
                            <button><svg viewBox="0 0 24 22"><use href="#hex"/><path d="M7 7l6-2 4 2v8l-5 3-5-3z" fill="#ddd"/><path d="M7 7l5 2 5-2M12 9v9" fill="none" stroke="#555"/></svg></button>
                            <button><svg viewBox="0 0 24 22"><use href="#hex"/><path d="M5 10l6-6 8 4-2 8-7 2z" fill="#ccc"/><path d="M5 10l8 2 6-4M13 12l-3 6" stroke="#777" fill="none"/></svg></button>
                            <button><svg viewBox="0 0 24 22"><use href="#hex"/><circle cx="12" cy="11" r="6" fill="none" stroke="#999" stroke-width="2" stroke-dasharray="2 2"/><path d="M12 6v10M7 11h10M8 7l8 8M16 7l-8 8" stroke="#aaa"/></svg></button>
                            <button><svg viewBox="0 0 24 22"><use href="#hex"/><path d="M10 5l8 1-1 12-10-5z" fill="#ccc"/><path d="M13 6l-1 9M8 10l9 1" stroke="#666"/></svg></button>
                        </div>
                    </div>
                    <p>Geometry<span>+</span></p>
                </div>
                <div class="group">
                    <div class="icons">
                        <div class="cluster">
                            <button><svg viewBox="0 0 24 22"><use href="#hex"/><circle cx="12" cy="11" r="5" fill="none" stroke="#eee" stroke-width="2"/><path d="M16 7q2 6-4 8-4 0-4-2 6-1 8-6z" fill="#eee"/></svg></button>
                            <button><svg viewBox="0 0 24 22"><use href="#hex"/><text x="12" y="17" class="glyph">7</text></svg></button>
                            <button><svg viewBox="0 0 24 22"><use href="#hex"/><text x="12" y="16" class="glyph small">0.1</text></svg></button>
                            <button><svg viewBox="0 0 24 22"><use href="#hex"/><text x="12" y="17" class="glyph serif">A</text></svg></button>
                        </div>
                    </div>
                    <p>Primitive<span>+</span></p>
                </div>
                <div class="group">
                    <div class="icons">
                        <div class="cluster">
                            <button><svg viewBox="0 0 24 22"><use href="#tile"/><path d="M12 4v7M4 17h16" stroke="#111" stroke-width="2"/><path d="M8 10h8l-4 5z" fill="#111"/></svg></button>
                            <button><svg viewBox="0 0 24 22"><rect x="1" y=".5" width="22" height="21" rx="2" fill="#ffc928" stroke="#7a5a10"/><path d="M4 17l4-7v7l5-10-1 10 5-9-1 8 4-6" fill="none" stroke="#a05a08" stroke-width="2"/></svg></button>
                        </div><i></i>
                        <div class="cluster">
                            <button><svg viewBox="0 0 24 22"><use href="#tile"/><path d="M8 3h8v16H8z" fill="#999" stroke="#111" stroke-width="2"/><path d="M9 4h6v7H9z" fill="#eee"/></svg></button>
                            <button><svg viewBox="0 0 24 22"><circle cx="12" cy="11" r="10" fill="#888" stroke="#444"/><path d="M12 4q5 0 9 7-4 7-9 7a7 7 0 0 1 0-14z" fill="#222"/></svg></button>
                            <button><svg viewBox="0 0 24 22"><use href="#tile"/><path d="M9 4h6l-3 5M15 11h-5v3q6-1 4 4H9" fill="none" stroke="#222" stroke-width="1.500"/></svg></button>
                            <button><svg viewBox="0 0 24 22"><use href="#tile"/><path d="M3 4h18v3H3zM3 10h18v3H3zM3 16h18v3H3z" fill="#ddd" stroke="#222"/></svg></button>
                        </div><i></i>
                        <div class="cluster">
                            <button><svg viewBox="0 0 24 22"><rect x="1" y=".5" width="22" height="21" rx="2" fill="url(#gPink)" stroke="#333"/><path d="M2 15h20" stroke="#500030"/><circle cx="3" cy="15" r="2" fill="#fff" stroke="#111"/><circle cx="17" cy="15" r="2" fill="#fff" stroke="#111"/></svg></button>
                            <button><svg viewBox="0 0 24 22"><rect x="1" y=".5" width="22" height="21" rx="2" fill="#50d020" stroke="#333"/><path d="M7 1h5v5H7zM12 11h5v5h-5zM2 11h5v5H2z" fill="#107818"/><path d="M17 1h5v5h-5zM7 11h5v5H7z" fill="#b0f030"/><path d="M2 16h5v5H2zM17 11h5v10h-5z" fill="#50f090"/></svg></button>
                        </div>
                    </div>
                    <p>Input<span>+</span></p>
                </div>
                <div class="group util">
                    <div class="icons">
                        <div class="cluster">
                            <button><svg viewBox="0 0 24 22"><path d="M6 14Q6 6 13 2q5 5 4 12" fill="none" stroke="#587820"/><path d="M8 3q6-4 10-1-4 5-10 1z" fill="#58a828"/><circle cx="6" cy="16" r="5" fill="#d81818"/><circle cx="17" cy="17" r="5" fill="#d81818"/><circle cx="5" cy="15" r="1" fill="#fff"/></svg></button>
                            <button><svg viewBox="0 0 24 22"><use href="#tile"/><path d="M12 20V9M12 15L5 8M12 13l7-6M8 12V6M15 11V5" stroke="#111" stroke-width="1.600"/><circle cx="12" cy="8" r="5" fill="#222" fill-opacity=".5"/><path d="M2 20h20" stroke="#111" stroke-width="2"/></svg></button>
                        </div><i></i>
                        <div class="cluster">
                            <button><svg viewBox="0 0 24 22"><path d="M3 8h10V4l9 8-9 7v-4H3z" fill="#505050" stroke="#333"/></svg></button>
                            <button><svg viewBox="0 0 24 22"><path d="M3 8h10V4l9 8-9 7v-4H3z" fill="#f4f4f4" stroke="#777"/></svg></button>
                        </div><i></i>
                        <div class="cluster">
                            <button><svg viewBox="0 0 24 22"><circle cx="9" cy="9" r="7" fill="#bbb" stroke="#777"/><circle cx="9" cy="8" r="3" fill="#666"/><circle cx="16" cy="14" r="6" fill="#e04878" stroke="#fff"/><circle cx="15" cy="12" r="2" fill="#ffd0dc"/></svg></button>
                            <button><svg viewBox="0 0 24 22"><path d="M10 2h5v7l4 10q0 2-2 2H7q-2 0-1-2l4-10z" fill="#f3dfe4" stroke="#a88"/><path d="M8 13h9l3 6-2 2H6z" fill="#e02860"/></svg></button>
                        </div><i></i>
                        <div class="cluster">
                            <button><svg viewBox="0 0 24 22"><path d="M3 8Q8 0 16 2q8 3 6 10-3 5-7 3-2 5-8 4 2-6-4-8z" fill="#2c2c2c"/><circle cx="12" cy="6" r="2" fill="#e040a0"/><circle cx="17" cy="8" r="2" fill="#40b0e0"/><circle cx="8" cy="9" r="2" fill="#70c030"/><circle cx="12" cy="15" r="2" fill="#f0a020"/></svg></button>
                        </div>
                    </div>
                    <p>Util<span>+</span></p>
                </div>
            </div>

            <div class="canvas-bar">
                <button><svg viewBox="0 0 20 20"><path d="M4 1h8l4 4v6H4z" fill="#fff" stroke="#777"/><path d="M1 9h8l3-3h6v13H1z" fill="#6cc040" stroke="#2c7818"/></svg></button>
                <button><svg viewBox="0 0 20 20"><use href="#save"/></svg></button>
                <i></i>
                <select aria-label="Zoom"><option>65%</option></select>
                <button><svg viewBox="0 0 20 20"><path d="M1 7V1h6M13 1h6v6M1 13v6h6M19 13v6h-6" fill="none" stroke="#111" stroke-width="3"/><path d="M7 7l6 6M13 7l-6 6" stroke="#111" stroke-width="2"/></svg></button>
                <svg class="carat"><use href="#carat"/></svg>
                <button><svg viewBox="0 0 20 20"><path d="M0 10q10-12 20 0-10 11-20 0z" fill="#e8f2f8" stroke="#333"/><circle cx="10" cy="10" r="5" fill="#3aa0d8"/><circle cx="10" cy="10" r="2" fill="#111"/></svg></button>
                <svg class="carat"><use href="#carat"/></svg>
                <button><svg viewBox="0 0 20 20"><path d="M1 12q4-4 3 1t5 3" fill="none" stroke="#601010" stroke-width="2"/><path d="M7 17l3-9 8-7 2 3-5 9z" fill="#e83020"/><path d="M10 8l8-7v3l-7 8z" fill="#ff9a80"/></svg></button>
                <div class="display">
                    <button><svg viewBox="0 0 20 20"><path d="M4 8l6-7q6 0 6 5l-5 6H4z" fill="#ccc" stroke="#777"/><path d="M2 15q8-7 16 0-8 7-16 0z" fill="#222"/></svg></button>
                    <button class="pearl"><svg viewBox="0 0 20 20"><use href="#drum"/><path d="M4 10l3 7M8 6l4 8" stroke="#666"/></svg></button>
                    <button class="red picked"><svg viewBox="0 0 20 20"><use href="#drum"/></svg></button>
                    <i></i>
                    <button class="cyan"><svg viewBox="0 0 20 20"><path d="M1 2l6 6-2 9 7 2 7-8q1-5-4-8l-5-1-3 3z" fill="currentColor" stroke="#333"/><path d="M9 5l4 5 4-3" fill="none" stroke="#064"/></svg></button>
                    <button class="lime"><svg viewBox="0 0 20 20"><use href="#drum"/><path d="M2 11l3-4 9 9-4 3q-8 0-8-8z" fill="#ccc"/><path d="M1 3l15 14" stroke="#222"/></svg></button>
                    <button><svg viewBox="0 0 20 20"><circle cx="10" cy="10" r="9" fill="#ddd" stroke="#555"/><path d="M10 1a9 9 0 0 0 0 18z" fill="#f09020"/></svg></button>
                    <i></i>
                    <button><svg viewBox="0 0 20 20"><path d="M10 1l7 3 2 6-3 7-6 2-7-3-2-7 3-6z" fill="#5a98e0" stroke="#204a90"/><path d="M8 4l5 1-3 5-6 1z" fill="#cfe4ff"/></svg></button>
                    <svg class="carat"><use href="#carat"/></svg>
                </div>
            </div>

            <div class="canvas">
                <svg class="graph" viewBox="972 553 948 931" preserveAspectRatio="xMinYMin slice">
                    <defs>
                        <g id="lists">
                            <path d="M1391 552C1396 592 1440 605 1485 605M1420 552Q1444 563 1485 562"/>
                            <path d="M1739 552C1751 690 1762 850 1826 985C1850 1035 1880 1065 1920 1088M1748 552C1760 690 1774 850 1836 965C1862 1012 1890 1045 1920 1067"/>
                            <path d="M972 751C1050 778 1150 803 1267 809M1299 811H1316M1348 802H1364M1348 812H1364"/>
                            <path d="M972 1002C1080 1085 1190 1143 1280 1150M1152 1111C1200 1113 1240 1145 1280 1148"/>
                            <path d="M1369 901Q1396 900 1417 891M1369 970Q1396 970 1417 956M1449 870H1461M1449 881H1461M1449 934H1461M1449 945H1461"/>
                            <path d="M1310 1154H1330M1361 1147H1378M1361 1156H1378M1382 1250Q1410 1250 1431 1237M1382 1314Q1410 1312 1431 1300M1461 1214H1475M1461 1224H1475M1461 1278H1475M1461 1289H1475"/>
                        </g>
                        <g id="trees">
                            <path d="M972 675C1015 677 1000 702 988 730C977 757 975 770 1005 770M972 721C1010 731 1050 731 1095 731"/>
                            <path d="M1048 690C1018 694 1030 712 1050 725C1085 755 1095 768 1090 782M972 780H1005M990 757C1030 766 1060 770 1095 770M1041 780H1056M1081 781C1102 775 1072 742 1095 742"/>
                            <path d="M1126 732C1140 732 1140 721 1154 721M1126 742C1140 742 1138 751 1153 751M1179 721C1215 721 1245 728 1261 746M1177 751H1252M1284 752C1320 752 1340 747 1376 747"/>
                            <path d="M1290 752C1310 765 1255 793 1256 808Q1258 816 1267 814M1271 766V789M1265 815C1245 900 1172 985 1175 1045C1178 1085 1210 1094 1265 1095"/>
                            <path d="M1404 807C1422 807 1410 790 1390 780C1364 760 1360 757 1376 757M1407 757H1421M1458 760H1475M1458 775C1560 775 1540 831 1647 831M1508 760C1570 760 1590 786 1646 786"/>
                            <path d="M1508 760C1568 758 1555 718 1530 680C1500 640 1446 605 1443 570Q1443 560 1452 552M1500 754C1495 690 1446 650 1443 610C1445 597 1465 594 1485 593M1525 591C1650 592 1800 594 1920 602"/>
                            <path d="M1494 869H1506M1539 869H1553M1494 934H1506M1539 934H1553M1586 871C1640 871 1590 803 1646 803M1586 935C1650 935 1590 847 1647 847"/>
                            <path d="M1297 1095C1332 1095 1355 1091 1389 1091M1305 1095C1320 1110 1265 1140 1268 1153Q1271 1160 1280 1158M1417 1151C1435 1151 1423 1135 1405 1123C1379 1105 1370 1101 1389 1101M1419 1101H1435M1470 1103H1489"/>
                            <path d="M1470 1118C1540 1118 1610 1120 1660 1126M1521 1103C1660 1103 1780 1112 1920 1123M1521 1103C1580 1105 1600 1130 1660 1131M1470 1119C1560 1119 1560 1174 1660 1174M1699 1129C1765 1131 1820 1150 1920 1163"/>
                            <path d="M1598 1214C1656 1214 1602 1146 1660 1145M1598 1278C1660 1278 1602 1190 1660 1189M1699 1129C1713 1129 1711 1141 1726 1141M1700 1172C1716 1172 1711 1151 1726 1151M1507 1214H1519M1552 1214H1567M1507 1278H1519M1552 1278H1567"/>
                        </g>
                    </defs>
                    <g class="wire">
                        <path d="M972 834C1150 940 1225 1000 1250 1040C1285 1095 1235 1110 1152 1110M1265 820C1220 835 1220 885 1228 930C1245 1020 1270 1106 1152 1110"/>
                        <path d="M1299 824C1350 826 1365 850 1417 864M1299 824C1375 826 1370 900 1432 929M1299 824C1315 824 1300 803 1316 803M1301 794L1316 792"/>
                        <path d="M1405 873L1417 870M1405 937L1417 935M1405 892L1417 889M1405 956L1417 953"/>
                        <path d="M1311 1168C1362 1170 1379 1195 1431 1208M1311 1168C1389 1172 1374 1245 1446 1273M1311 1168C1327 1168 1312 1147 1330 1147M1314 1138L1330 1136"/>
                        <path d="M1419 1216L1431 1214M1419 1281L1431 1278M1418 1236L1431 1233M1418 1301L1431 1298"/>
                    </g>
                    <use href="#lists" class="wire-list"/><use href="#lists" class="wire-core"/>
                    <use href="#trees" class="wire-tree"/><use href="#trees" class="wire-tree-core"/>
                    <path d="M1687 786C1702 786 1698 799 1713 799M1688 831C1705 831 1695 808 1713 807" class="wire-red"/>

                    <g class="node">
                        <rect x="1485" y="545" width="39" height="25"/><rect x="1485" y="585" width="39" height="30"/>
                        <rect x="1005" y="765" width="35" height="20"/><rect x="1056" y="776" width="24" height="10"/><rect x="1095" y="765" width="30" height="20"/><rect x="1095" y="726" width="30" height="20"/>
                        <rect x="1154" y="716" width="24" height="11"/><rect x="1153" y="746" width="23" height="10"/><rect x="1252" y="746" width="31" height="20"/><rect x="1376" y="742" width="30" height="30"/>
                        <rect x="1421" y="752" width="36" height="30"/><rect x="1475" y="754" width="32" height="21"/><rect x="1267" y="799" width="30" height="31"/><rect x="1317" y="787" width="31" height="31"/><rect x="1364" y="797" width="39" height="21"/>
                        <rect x="1417" y="865" width="30" height="30"/><rect x="1417" y="929" width="30" height="30"/><rect x="1461" y="855" width="31" height="30"/><rect x="1461" y="920" width="31" height="30"/>
                        <rect x="1506" y="864" width="32" height="12"/><rect x="1506" y="928" width="32" height="13"/><rect x="1553" y="865" width="31" height="21"/><rect x="1553" y="929" width="31" height="21"/>
                        <rect x="1266" y="1090" width="30" height="20"/><rect x="1390" y="1086" width="29" height="29"/><rect x="1435" y="1096" width="34" height="30"/><rect x="1489" y="1098" width="31" height="21"/>
                        <rect x="1281" y="1143" width="30" height="30"/><rect x="1330" y="1131" width="31" height="30"/><rect x="1378" y="1141" width="39" height="20"/>
                        <rect x="1431" y="1209" width="30" height="30"/><rect x="1431" y="1273" width="30" height="30"/><rect x="1475" y="1199" width="31" height="31"/><rect x="1475" y="1264" width="31" height="30"/>
                        <rect x="1519" y="1207" width="32" height="13"/><rect x="1519" y="1271" width="32" height="14"/><rect x="1567" y="1209" width="31" height="20"/><rect x="1567" y="1273" width="31" height="21"/>
                        <rect x="1660" y="1122" width="39" height="32"/><rect x="1661" y="1167" width="39" height="31"/><rect x="1727" y="1136" width="30" height="20"/>
                    </g>
                    <g class="node off"><rect x="1646" y="779" width="39" height="31"/><rect x="1647" y="823" width="40" height="31"/><rect x="1713" y="792" width="31" height="20"/></g>

                    <g class="slider">
                        <rect x="1328" y="868" width="78" height="9"/><rect x="1328" y="868" width="17" height="9" class="cap"/>
                        <rect x="1328" y="932" width="78" height="9"/><rect x="1328" y="932" width="17" height="9" class="cap"/>
                        <rect x="1341" y="1212" width="78" height="9"/><rect x="1341" y="1212" width="17" height="9" class="cap"/>
                        <rect x="1341" y="1276" width="78" height="9"/><rect x="1341" y="1276" width="17" height="9" class="cap"/>
                        <rect x="1073" y="1106" width="78" height="9"/><rect x="1073" y="1106" width="17" height="9" class="cap"/>
                    </g>
                    <g class="note">
                        <rect x="1269" y="790" width="30" height="9"/><text x="1273" y="797">0 to 1</text>
                        <rect x="1283" y="1133" width="30" height="9"/><text x="1287" y="1140">0 to 3</text>
                        <rect x="1391" y="887" width="14" height="9"/><text x="1395" y="894">0</text>
                        <rect x="1391" y="952" width="14" height="9"/><text x="1395" y="959">0</text>
                        <rect x="1404" y="1231" width="14" height="9"/><text x="1409" y="1238">0</text>
                        <rect x="1404" y="1296" width="14" height="9"/><text x="1409" y="1303">0</text>
                        <rect x="1049" y="667" width="77" height="47"/>
                        <path d="M1049 667h77v8h-77zM1049 683h77v9h-77zM1049 701h77v9h-77z" fill="#e6e6e6"/><path d="M1055 667v47" stroke="#ccc"/><path d="M1123 667h3v7h-3z" fill="#777"/>
                        <text x="1072" y="673">{0;0;0;0;0;0;0}</text><text x="1050" y="681">0 1</text>
                        <text x="1072" y="690">{0;1;0;0;0;0;0}</text><text x="1050" y="699">0 1</text>
                        <text x="1072" y="707">{0;2;0;0;0;0;0}</text><text x="1050" y="714">0 1</text>
                    </g>

                    <g class="pool">
                        <rect x="1271" y="882" width="96" height="37"/><rect x="1271" y="952" width="96" height="36"/>
                        <rect x="1285" y="1227" width="95" height="47"/><rect x="1285" y="1295" width="95" height="36"/>
                    </g>
                    <path class="teeth" d="M1269 881v40M1269 951v39M1283 1226v50M1283 1294v39"/>
                    <path class="lines" d="M1288 886h67M1288 894h67M1288 902h67M1288 956h67M1288 964h67M1288 972h67M1302 1231h67M1302 1239h67M1302 1247h67M1302 1255h67M1302 1263h67M1302 1300h67M1302 1308h67M1302 1316h67M1302 1324h67"/>
                    <g class="rows">
                        <text x="1276" y="889">0</text><text x="1276" y="897">1</text><text x="1276" y="905">2</text>
                        <text x="1276" y="959">0</text><text x="1276" y="967">1</text><text x="1276" y="975">2</text>
                        <text x="1289" y="1234">0</text><text x="1289" y="1242">1</text><text x="1289" y="1250">2</text><text x="1289" y="1258">3</text><text x="1289" y="1266">4</text>
                        <text x="1289" y="1302">0</text><text x="1289" y="1310">1</text><text x="1289" y="1318">2</text><text x="1289" y="1326">3</text>
                    </g>
                    <g class="chip">
                        <rect x="1283" y="883" width="12" height="7"/><text x="1287" y="889">3</text>
                        <rect x="1345" y="891" width="13" height="8"/><text x="1348" y="897">94</text>
                        <rect x="1314" y="899" width="13" height="8"/><text x="1317" y="905">50</text>
                        <rect x="1318" y="953" width="13" height="7"/><text x="1321" y="959">56</text>
                        <rect x="1332" y="960" width="13" height="8"/><text x="1335" y="966">74</text>
                        <rect x="1288" y="968" width="13" height="8"/><text x="1291" y="974">11</text>
                        <rect x="1322" y="1228" width="13" height="7"/><text x="1325" y="1234">29</text>
                        <rect x="1304" y="1235" width="13" height="8"/><text x="1307" y="1241">16</text>
                        <rect x="1346" y="1243" width="13" height="8"/><text x="1349" y="1249">79</text>
                        <rect x="1301" y="1251" width="13" height="8"/><text x="1304" y="1257">11</text>
                        <rect x="1358" y="1259" width="13" height="8"/><text x="1361" y="1265">95</text>
                        <rect x="1345" y="1296" width="13" height="7"/><text x="1348" y="1302">73</text>
                        <rect x="1299" y="1304" width="13" height="8"/><text x="1304" y="1310">6</text>
                        <rect x="1307" y="1312" width="13" height="8"/><text x="1310" y="1318">14</text>
                        <rect x="1339" y="1320" width="13" height="8"/><text x="1342" y="1326">67</text>
                        <path d="M1352 1329h13" stroke="#222"/>
                    </g>
                    <g class="compass">
                        <path d="M1874 1452a20 20 0 0 1 38 0" fill="none" stroke="#080808" stroke-width="6"/><path d="M1866 1444l8-3v11z" fill="#080808"/>
                        <circle cx="1893" cy="1456" r="18" fill="url(#gBall)" stroke="#f4f4f4" stroke-width="2"/>
                        <path d="M1898 1439l5 3-4 5zM1876 1451l5-5 1 6zM1888 1473l-5-4 6-2zM1910 1461l-5 4-1-6z" fill="#fff"/>
                    </g>
                    <path d="M973 640v75" stroke="#8b7f93" stroke-width="2"/>
                </svg>
                <div class="quick">
                    <button><svg viewBox="0 0 24 22"><use href="#tile"/><path d="M12 4v7M4 17h16" stroke="#111" stroke-width="2"/><path d="M8 10h8l-4 5z" fill="#111"/></svg></button>
                    <button><svg viewBox="0 0 24 22"><path d="M13 9l5-7" stroke="#222" stroke-width="2"/><ellipse cx="11" cy="14" rx="8" ry="6" fill="#f08a18" stroke="#904808"/><path d="M6 12q3-3 6-1" stroke="#ffe0a0" stroke-width="2" fill="none"/></svg></button>
                    <button><svg viewBox="0 0 24 22"><path d="M7 5v13M17 2v16" stroke="#111" stroke-width="2"/><circle cx="7" cy="4" r="2" fill="#ddd" stroke="#111"/><path d="M4 10h6l-3 4zM14 10h6l-3 4z" fill="#111"/><path d="M3 20h18" stroke="#18b048" stroke-width="3"/></svg></button>
                    <button><svg viewBox="0 0 24 22"><path d="M4 19L20 3" stroke="#444" stroke-width="2"/><path d="M8 15V9l8-3v6z" fill="#e8a818" stroke="#604008"/><circle cx="4" cy="19" r="2" fill="#fff" stroke="#333"/><circle cx="20" cy="3" r="2" fill="#fff" stroke="#333"/></svg></button>
                    <button><svg viewBox="0 0 24 22"><rect x="1" y=".5" width="22" height="21" rx="2" fill="#ffc928" stroke="#7a5a10"/><path d="M4 17l4-7v7l5-10-1 10 5-9-1 8 4-6" fill="none" stroke="#a05a08" stroke-width="2"/></svg></button>
                </div>
            </div>
            <footer class="notice"><svg viewBox="0 0 16 16"><circle cx="8" cy="8" r="7" fill="#1c62b0" stroke="#0c3068"/><path d="M5 4q-2 6 3 9 5-3 3-9" fill="none" stroke="#5cb8f0" stroke-width="2"/><path d="M8 3v7" stroke="#fff" stroke-width="2"/></svg>Autosave complete (100 seconds ago)<span>1.0.0007</span></footer>
        </section>
    </main>
    <script src="script.js"></script>
</body>

</html>
```

FILE: styles.css
```
* {
    box-sizing: border-box;
    margin: 0;
    padding: 0;
}

body {
    min-height: 100vh;
    display: flex;
    align-items: center;
    background-color: #fff;
    font-family: "Open Sans", "Noto Sans", sans-serif;
    font-size: 11px;
    color: #d8d8d8;
}

button {
    background: none;
    border: none;
    color: inherit;
    font: inherit;
    white-space: nowrap;
}

svg {
    display: block;
}

.sprite {
    position: absolute;
    width: 0;
    height: 0;
}

.desktop {
    width: 100%;
    aspect-ratio: 1920 / 1088;
    display: grid;
    grid-template-columns: minmax(0, 968fr) 4px minmax(0, 948fr);
    grid-template-rows: minmax(0, 1fr);
    overflow: hidden;
}

.red { color: #c81818; }
.blue { color: #2c6ad8; }
.silver { color: #a0a0a0; }
.ink { color: #161616; }
.pearl { color: #d8d8d8; }
.cyan { color: #10a0a0; }
.lime { color: #68a818; }

/* Modeler */
.modeler {
    background-color: #404040;
    border-top: 1px solid #888;
    border-left: 2px solid #2c2c2c;
    display: flex;
    flex-direction: column;
    min-width: 0;
    overflow: hidden;
}

.history {
    height: 27px;
    margin-right: 17px;
    padding-left: 7px;
    display: flex;
    flex-direction: column;
    justify-content: flex-end;
    overflow: hidden;
    font-family: "Noto Sans", sans-serif;
    font-size: 12px;
    line-height: 16px;
    white-space: nowrap;
    flex-shrink: 0;
    border-bottom: 1px solid #777;
    box-shadow: 17px 0 #f0f0f0;
}

.command {
    height: 23px;
    display: flex;
    align-items: center;
    padding: 0 0 2px 7px;
    border-bottom: 1px solid #555;
    font-size: 12px;
    flex-shrink: 0;
}

.command label {
    font-weight: bold;
    color: #eee;
}

.command input {
    flex: 1;
    height: 18px;
    margin-left: 3px;
    background: none;
    border: none;
    border-left: 1px solid #ccc;
}

.spinner {
    width: 15px;
    display: flex;
    flex-direction: column;
    gap: 1px;
    margin-right: 1px;
}

.spinner button {
    background-color: #f0f0f0;
    height: 9px;
    display: grid;
    place-items: center;
}

.spinner svg {
    width: 7px;
    height: 7px;
}

.tool-tabs {
    height: 21px;
    display: flex;
    gap: 21px;
    align-items: stretch;
    padding-left: 17px;
    border-bottom: 1px solid #666;
    flex-shrink: 0;
}

.tool-tabs button {
    padding-top: 4px;
}

.tool-tabs .current {
    position: relative;
    border: 1px solid #777;
    border-bottom: none;
    border-left: none;
    margin-top: 2px;
    padding: 1px 13px 0 1px;
    height: 19px;
    background-color: #404040;
}

.slant {
    position: absolute;
    right: 100%;
    top: -2px;
    width: 15px;
    height: 20px;
    fill: none;
    stroke: #777;
}

.tool-tabs .tab-menu {
    margin-left: auto;
    margin-right: 1px;
    border-left: 1px solid #666;
    display: flex;
    align-items: center;
    gap: 2px;
    padding: 0 0 0 2px;
}

.tab-menu svg {
    width: 12px;
    height: 12px;
}

.vray-bar {
    height: 35px;
    padding: 2px 0 12px 50px;
    display: flex;
    align-items: center;
    flex-shrink: 0;
}

.vray-bar button {
    width: 21px;
    height: 21px;
    display: grid;
    place-items: center;
}

.vray-bar svg {
    width: 17px;
    height: 17px;
}

.vray-bar i {
    width: 1px;
    height: 18px;
    margin: 0 1px;
    background-color: #777;
}

.space {
    width: 22px;
}

.space.short {
    width: 10px;
}

.dim {
    fill: none;
    stroke: #6e6e6e;
    stroke-width: 1.5;
}

.lit {
    fill: none;
    stroke: #c87430;
    stroke-width: 1.5;
}

.workspace {
    flex: 1;
    min-height: 0;
    display: flex;
}

.side {
    display: flex;
    padding-top: 3px;
    flex-shrink: 0;
}

.side button {
    height: 21px;
    display: grid;
    place-items: center;
}

.side svg {
    width: 18px;
    height: 18px;
}

.side hr {
    border: none;
    height: 1px;
    background-color: #777;
}

.side-one {
    width: 24px;
    padding: 2px 3px 0 0;
    flex-direction: column;
    border-right: 1px solid #555;
}

.side-one hr {
    margin: 2px 0 2px 1px;
}

.side-two {
    width: 49px;
    padding: 3px 7px 0 0;
    flex-wrap: wrap;
    align-content: flex-start;
}

.side-two hr {
    width: 100%;
    margin: 0 0 3px 3px;
}

.side-two button {
    width: 21px;
}

.view {
    flex: 1;
    min-width: 0;
    display: flex;
    flex-direction: column;
}

.viewport {
    flex: 1;
    min-height: 0;
    position: relative;
    border: 1px solid #777;
    overflow: hidden;
}

.view-name {
    position: absolute;
    top: 0;
    left: 0;
    height: 17px;
    padding-left: 6px;
    background-color: #d80000;
    color: #fff;
    font-weight: bold;
    display: flex;
    align-items: center;
    gap: 6px;
}

.view-name svg {
    width: 10px;
    height: 13px;
    padding: 0 1px;
    border-left: 1px solid #f88;
    fill: #fff;
}

.drawing {
    width: 100%;
    height: 100%;
}

.axis {
    font-size: 12px;
    fill: #777;
}

.cell {
    fill: none;
    stroke-width: 1;
}

.cell.r { stroke: #dc1212; }
.cell.g { stroke: #08e808; }
.cell.t { stroke: #48a6a8; }

.view-tabs {
    height: 20px;
    display: flex;
    gap: 15px;
    flex-shrink: 0;
    padding-bottom: 1px;
}

.view-tabs .current {
    border: 1px solid #666;
    border-top: none;
    border-bottom-left-radius: 8px;
    padding: 0 5px 0 9px;
    margin-right: -5px;
}

.view-tabs .plus {
    font-size: 15px;
    font-weight: bold;
    color: #fff;
    line-height: 19px;
}

.layers {
    width: 280px;
    margin-left: 6px;
    display: flex;
    flex-direction: column;
    flex-shrink: 0;
    overflow: hidden;
}

.layers h2 {
    font-size: 11px;
    font-weight: normal;
    line-height: 20px;
    display: flex;
    align-items: center;
    gap: 4px;
    padding-left: 1px;
}

.layers h2::after {
    content: "";
    flex: 1;
    height: 1px;
    margin-right: 2px;
    background-color: #555;
}

.panel-tabs {
    height: 20px;
    display: flex;
    border-bottom: 1px solid #666;
}

.panel-tabs button {
    width: 33px;
    height: 20px;
    display: grid;
    place-items: center;
    padding-right: 4px;
}

.panel-tabs .current {
    border: 1px solid #777;
    border-bottom-color: #404040;
}

.panel-tabs svg {
    width: 14px;
    height: 14px;
}

.panel-tabs .gear {
    margin-left: auto;
    width: 18px;
    padding: 0;
}

.layer-tools {
    height: 35px;
    padding: 2px 0 0 3px;
    display: flex;
    align-items: center;
    border-left: 1px solid #666;
    border-bottom: 1px solid #555;
}

.layer-tools button {
    width: 20px;
    display: grid;
    place-items: center;
}

.layer-tools svg {
    width: 14px;
    height: 14px;
}

.layers table {
    width: 100%;
    table-layout: fixed;
    border-collapse: collapse;
}

.layers th {
    height: 19px;
    text-align: left;
    font-weight: normal;
    padding-left: 3px;
    border-right: 1px solid #4a4a4a;
}

.c-name { width: 131px; }
.c-icon { width: 16px; }
.c-mat { width: 33px; }

.layers td {
    height: 18px;
    line-height: 17px;
    border-bottom: 1px solid #4a4a4a;
    white-space: nowrap;
}

.layers td:first-child {
    padding-left: 6px;
}

.layers td:last-child {
    padding-left: 3px;
}

.active td {
    font-weight: bold;
    color: #fff;
}

.ico {
    width: 14px;
    height: 14px;
    margin: 0 auto;
}

.swatch {
    display: block;
    width: 12px;
    height: 12px;
    margin: 0 auto;
    border: 1px solid #ccc;
}

.brick { background-color: #bf3f3f; }
.pale { background-color: #e2e2e2; }
.white { background-color: #fff; }
.green { background-color: #00ff00; }
.teal { background-color: #3fbfbf; }
.scarlet { background-color: #ff0000; }
.orange { background-color: #ff7f00; }

.dot {
    display: block;
    width: 12px;
    height: 12px;
    margin-left: 4px;
    border-radius: 50%;
    background-color: #fff;
}

.hscroll {
    height: 17px;
    margin: auto 5px 3px 0;
    padding: 6px 75px 0 15px;
    background-color: #ececec;
}

.hscroll span {
    display: block;
    height: 5px;
    background-color: #8a8a8a;
}

.osnap {
    height: 25px;
    padding: 4px 0 0 9px;
    display: flex;
    gap: 6px;
    align-items: center;
    flex-shrink: 0;
}

.osnap label {
    display: flex;
    align-items: center;
    gap: 3px;
}

.osnap .disable {
    margin-left: 8px;
}

.osnap input {
    appearance: none;
    width: 11px;
    height: 11px;
    border-radius: 2px;
    background-color: #f4f4f4;
    display: grid;
    place-items: center;
}

.osnap input:checked {
    background-color: #0a60c0;
}

.osnap input:checked::before {
    content: "";
    width: 6px;
    height: 3px;
    border: 1px solid #fff;
    border-top: none;
    border-right: none;
    transform: rotate(-45deg);
}

.osnap .partial {
    background-color: #909090;
    border: 2px solid #a8d0f0;
}

.status {
    height: 14px;
    display: flex;
    flex-shrink: 0;
    overflow: hidden;
    border-top: 1px solid #5a5a5a;
    line-height: 16px;
}

.status span,
.status button {
    width: 75px;
    height: 16px;
    text-align: center;
    border-right: 1px solid #666;
    flex-shrink: 0;
}

.status span:first-child { width: 47px; }

.status .layer-cell {
    width: 146px;
    display: flex;
    gap: 2px;
    padding-left: 3px;
}

.layer-cell b {
    width: 12px;
    height: 14px;
    margin-top: 2px;
    background-color: #e2e2e2;
}

.status button {
    width: auto;
    padding: 0 6px;
}

.status .on {
    background-color: #ccd6f0;
    color: #111;
    font-weight: bold;
    padding: 0 4px;
    margin-right: 1px;
}

.status .cut {
    width: 6px;
    overflow: hidden;
}

.wallpaper {
    background: linear-gradient(#1a1a2a 7%, #b09a50 7%, #8f8340 30%, #b0762c 35%, #a04a30 42%, #8a7a88 47%, #9a8850 55%, #8c3c30 63%, #2a2a2e 64%);
    border-right: 1px solid #999;
}

/* Node editor */
.nodes {
    display: flex;
    flex-direction: column;
    min-width: 0;
    background-color: #f0f0f0;
    color: #707070;
}

.ribbon-tabs {
    height: 26px;
    padding: 6px 0 0 0;
    display: flex;
    font-family: "Liberation Sans", Arial, sans-serif;
    font-size: 10px;
    background: linear-gradient(#fff, #efefef 8px);
    border-bottom: 1px solid #c4c4c4;
    flex-shrink: 0;
    overflow: hidden;
}

.ribbon-tabs button {
    min-width: 26px;
    padding: 2px 7px 0 8px;
}

.ribbon-tabs button:nth-child(n+14) {
    padding: 2px 8px 0 8px;
}

.ribbon-tabs .current {
    padding: 0 6px 0 5px;
    background-color: #fff;
    color: #222;
    border: 1px solid #ccc;
    border-bottom: none;
    border-radius: 4px 4px 0 0;
}

.ribbon {
    height: 82px;
    padding: 3px 0 9px 1px;
    display: flex;
    gap: 2px;
    background: linear-gradient(#d6d6d6, #f0f0f0);
    flex-shrink: 0;
}

.group {
    display: flex;
    flex-direction: column;
    border: 1px solid #b0b0b0;
    border-radius: 4px;
    overflow: hidden;
}

.icons {
    flex: 1;
    display: flex;
    padding: 0 2px;
    background: linear-gradient(#d0d0d0, #ececec);
}

.icons i {
    width: 1px;
    margin: 4px;
    background-color: #bbb;
}

.util .icons {
    padding-right: 4px;
}

.cluster {
    display: grid;
    grid-template-rows: repeat(2, 26px);
    grid-auto-columns: 26px;
    grid-auto-flow: column;
}

.cluster button {
    display: grid;
    place-items: center;
}

.cluster svg {
    width: 23px;
    height: 22px;
}

.glyph {
    font-size: 16px;
    font-weight: bold;
    fill: #fff;
    text-anchor: middle;
}

.glyph.small { font-size: 10px; }
.glyph.serif { font-family: "Liberation Serif", serif; }

.group p {
    height: 14px;
    padding-right: 8px;
    position: relative;
    background: linear-gradient(#333, #161616);
    color: #f0f0f0;
    font-family: "Liberation Sans", Arial, sans-serif;
    font-size: 9px;
    font-weight: bold;
    line-height: 13px;
    text-align: center;
}

.group p span {
    position: absolute;
    right: 3px;
    top: 0;
    color: #bbb;
}

.canvas-bar {
    height: 29px;
    border-top: 1px solid #888;
    padding: 0 2px 2px 0;
    display: flex;
    align-items: center;
    background: linear-gradient(#f4f4f4, #fff);
    color: #111;
    flex-shrink: 0;
}

.canvas-bar button {
    width: 26px;
    height: 26px;
    display: grid;
    place-items: center;
}

.canvas-bar button svg {
    width: 20px;
    height: 20px;
}

.canvas-bar i {
    width: 1px;
    height: 20px;
    margin: 0 3px;
    background-color: #ccc;
}

.canvas-bar select {
    width: 134px;
    height: 22px;
    margin-right: 4px;
    background-color: #fff;
    border: 1px solid #aaa;
    font: inherit;
    color: #222;
}

.carat {
    width: 6px;
    height: 6px;
    margin: 0 3px;
}

.display {
    margin-left: auto;
    display: flex;
    align-items: center;
}

.display .carat {
    margin: 0;
}

.canvas-bar .display i {
    margin: 0 1px;
}

.display .picked {
    margin-right: 8px;
    border: 1px solid #50a0e8;
    background-color: #f4f8ff;
}

.canvas {
    flex: 1;
    min-height: 0;
    position: relative;
    background-color: #404040;
    overflow: hidden;
}

.graph {
    width: 100%;
    height: 100%;
}

.wire,
.wire-list,
.wire-tree,
.wire-core,
.wire-tree-core,
.wire-red {
    fill: none;
    stroke: #dcdcdc;
    stroke-width: 2;
}

.wire-list {
    stroke: #d8d8d8;
    stroke-width: 4;
}

.wire-core {
    stroke: #8a8a8a;
    stroke-width: 1;
}

.wire-tree {
    stroke: #d0d0d0;
    stroke-width: 3;
    stroke-dasharray: 7 2;
}

.wire-tree-core {
    stroke: #6c6c6c;
    stroke-width: 1;
    stroke-dasharray: 5 4;
    stroke-dashoffset: -1;
}

.wire-red {
    stroke: #c04a28;
}

.node rect {
    fill: url(#gNode);
    stroke: #777586;
    rx: 1px;
}

.off rect {
    fill: url(#gGrey);
    stroke: #999;
}

.slider rect {
    fill: #dedede;
    stroke: #aaa;
}

.slider .cap {
    fill: #8d8b9b;
    stroke: #777;
}

.note rect {
    fill: #fff;
    stroke: #ccc;
}

.note text,
.rows text,
.chip text {
    font-family: "Liberation Mono", monospace;
    font-size: 5px;
    fill: #888;
}

.pool rect {
    fill: #cfcfcf;
    stroke: #ff0d80;
    stroke-width: 4;
}

.teeth {
    stroke: #404040;
    stroke-width: 2;
    stroke-dasharray: 1 3;
}

.lines {
    stroke: #b4b4b4;
}

.rows text,
.chip text {
    fill: #333;
}

.chip rect {
    fill: #fff;
    stroke: #444;
}

.quick {
    position: absolute;
    left: 0;
    bottom: 0;
    height: 26px;
    padding-right: 6px;
    display: flex;
    align-items: center;
    background: linear-gradient(#e8e8e8, #9a9a9a);
    border-right: 1px solid #666;
}

.quick button {
    width: 26px;
    display: grid;
    place-items: center;
}

.quick svg {
    width: 18px;
    height: 18px;
}

.notice {
    height: 20px;
    padding: 0 29px 0 2px;
    display: flex;
    align-items: center;
    gap: 3px;
    color: #222;
    border-top: 1px solid #ddd;
    flex-shrink: 0;
}

.notice svg {
    width: 15px;
    height: 16px;
}

.notice span {
    margin-left: auto;
    color: #777;
    font-size: 10px;
}
```

FILE: script.js
```
const SVG_NS = 'http://www.w3.org/2000/svg';
const COLS = 30;
const ROWS = 16;
const PITCH = 10.86;
const SIZE = 9.5;

let seed = 41;

// Small repeatable generator, so each facade keeps its pattern
function random() {
    seed = (seed * 16807) % 2147483647;
    return seed / 2147483647;
}

function pick(chances) {
    let r = random();
    for (const key in chances) {
        r -= chances[key];
        if (r < 0) return key;
    }
    return 't';
}

// Packed cell: close bars with one slanted brace
function denseCell(x, y) {
    let d = '';
    if (random() < 0.75) {
        for (let i = 0.5; i < SIZE; i += 2.2) {
            const skew = i > 1 && i < 7 ? (random() - 0.5) * 4 : 0;
            d += `M${x + i} ${y}l${skew} ${SIZE}`;
        }
        d += `M${x} ${y + SIZE / 2}h${SIZE}`;
    } else {
        for (let i = 0.5; i < SIZE; i += 2.2) {
            d += `M${x} ${y + i}l${SIZE} ${(random() - 0.5) * 2}`;
        }
        d += `M${x} ${y}v${SIZE}`;
    }
    return d;
}

function lightCell(x, y) {
    const upright = random() < 0.5;
    const lines = random() < 0.45 ? 3 : 2;
    const step = 3 + random() * 2;
    let at = random() * 3;
    let d = '';
    for (let i = 0; i < lines && at < SIZE; i++) {
        const skew = random() < 0.5 ? 0 : (random() - 0.5) * 6;
        d += upright ? `M${x + at} ${y}l${skew} ${SIZE - 1}` : `M${x} ${y + at}l${SIZE} ${skew / 2}`;
        at += step;
    }
    return d;
}

function drawBlock(left, top, fill, solid, tint) {
    const paths = { r: '', g: '', t: '' };
    for (let row = 0; row < ROWS; row++) {
        for (let col = 0; col < COLS; col++) {
            if (random() > fill(row)) continue;
            const cell = random() < solid(row) ? denseCell : lightCell;
            paths[pick(tint(row))] += cell(left + col * PITCH, top + row * PITCH);
        }
    }
    for (const key in paths) {
        const path = document.createElementNS(SVG_NS, 'path');
        path.setAttribute('class', `cell ${key}`);
        path.setAttribute('d', paths[key]);
        document.getElementById('cells').appendChild(path);
    }
}

const thin = row => 0.42 + row * 0.08;
const thick = row => (row < 8 ? 0.02 : 0.35 + (row - 8) * 0.08);

drawBlock(230, 656, thin, thick, () => ({ r: 0.28, g: 0.24, t: 0.48 }));
drawBlock(230, 924, thin, thick, () => ({ r: 0.25, g: 0.24, t: 0.51 }));
drawBlock(230, 1192, row => 0.8 + row * 0.05, row => (row < 8 ? 0.04 : 0.5 + (row - 8) * 0.07),
    row => (row < 8 ? { r: 0.82, g: 0, t: 0.18 } : { r: 0.18, g: 0.7, t: 0.12 }));
```
